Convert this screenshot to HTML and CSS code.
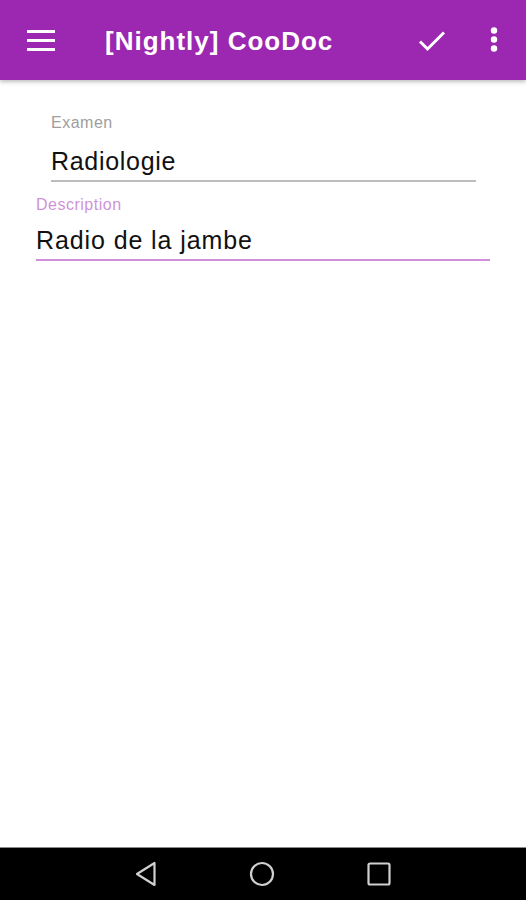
FILE: index.html
```html
<!DOCTYPE html>
<html lang="fr">
<head>
  <meta charset="UTF-8" />
  <meta name="viewport" content="width=device-width, initial-scale=1.0"/>
  <title>[Nightly] CooDoc</title>
  <link rel="stylesheet" href="styles.css">
</head>
<body>
  <div class="screen">
    <header class="toolbar">
      <button class="icon-btn menu-btn" aria-label="Menu">
        <svg width="28" height="22" viewBox="0 0 28 22">
          <rect x="0" y="0" width="28" height="3" fill="#fff"/>
          <rect x="0" y="9" width="28" height="3" fill="#fff"/>
          <rect x="0" y="18" width="28" height="3" fill="#fff"/>
        </svg>
      </button>
      <h1 class="title">[Nightly] CooDoc</h1>
      <button class="icon-btn check-btn" aria-label="Valider">
        <svg width="28" height="22" viewBox="0 0 28 22">
          <polyline points="2,11.5 9.5,19 26,2.5" fill="none" stroke="#fff" stroke-width="3"/>
        </svg>
      </button>
      <button class="icon-btn more-btn" aria-label="Plus">
        <svg width="8" height="26" viewBox="0 0 8 26">
          <circle cx="4" cy="3.5" r="3.2" fill="#fff"/>
          <circle cx="4" cy="12.5" r="3.2" fill="#fff"/>
          <circle cx="4" cy="21.5" r="3.2" fill="#fff"/>
        </svg>
      </button>
    </header>

    <main class="content">
      <div class="field field-exam">
        <label class="field-label">Examen</label>
        <div class="field-value">Radiologie</div>
      </div>
      <div class="field field-desc focused">
        <label class="field-label">Description</label>
        <div class="field-value">Radio de la jambe</div>
      </div>
    </main>

    <nav class="navbar">
      <svg class="nav-icon" width="22" height="26" viewBox="0 0 22 26">
        <polygon points="19.5,2 19.5,24 2,13" fill="none" stroke="#d0d0d0" stroke-width="2.2" stroke-linejoin="round"/>
      </svg>
      <svg class="nav-icon" width="26" height="26" viewBox="0 0 26 26">
        <circle cx="13" cy="13" r="11" fill="none" stroke="#d0d0d0" stroke-width="2.2"/>
      </svg>
      <svg class="nav-icon" width="24" height="24" viewBox="0 0 24 24">
        <rect x="1.5" y="1.5" width="21" height="21" rx="1.5" fill="none" stroke="#d0d0d0" stroke-width="2.2"/>
      </svg>
    </nav>
  </div>
</body>
</html>
```

FILE: styles.css
```css
body {
  margin: 0;
  font-family: 'Liberation Sans', Arial, sans-serif;
  background: #fff;
}
.screen {
  height: 900px;
  display: flex;
  flex-direction: column;
}
.toolbar {
  height: 80px;
  background: #9c27b0;
  display: flex;
  align-items: center;
  box-shadow: 0 2px 4px rgba(0, 0, 0, 0.25);
  position: relative;
  z-index: 1;
}
.icon-btn {
  background: none;
  border: none;
  padding: 0;
  display: flex;
  align-items: center;
  justify-content: center;
}
.menu-btn {
  margin-left: 27px;
  margin-top: 2px;
}
.title {
  margin: 2px 0 0 50px;
  flex: 1;
  color: #fff;
  font-size: 26px;
  font-weight: bold;
  letter-spacing: 1px;
  line-height: 32px;
}
.check-btn {
  margin-right: 44px;
  margin-top: 2px;
}
.more-btn {
  margin-right: 28px;
}
.content {
  flex: 1;
  padding-top: 33px;
}
.field {
  display: flex;
  flex-direction: column;
}
.field-exam {
  margin: 0 50px 0 51px;
}
.field-desc {
  margin: 13px 36px 0 36px;
}
.field-label {
  font-size: 16px;
  line-height: 20px;
  letter-spacing: 0.5px;
  color: #9e9e9e;
}
.field-value {
  font-size: 25px;
  line-height: 30px;
  letter-spacing: 0.7px;
  color: #111;
  margin-top: 13px;
  padding-bottom: 4px;
  border-bottom: 2px solid #bdbdbd;
}
.focused .field-label {
  color: #ce93d8;
}
.focused .field-value {
  margin-top: 10px;
  letter-spacing: 0.9px;
  border-bottom-color: #cf8fd9;
}
.navbar {
  height: 52px;
  background: #000;
  border-top: 1px solid #8a8a8a;
  display: flex;
  align-items: center;
  justify-content: center;
  gap: 92px;
}
```
